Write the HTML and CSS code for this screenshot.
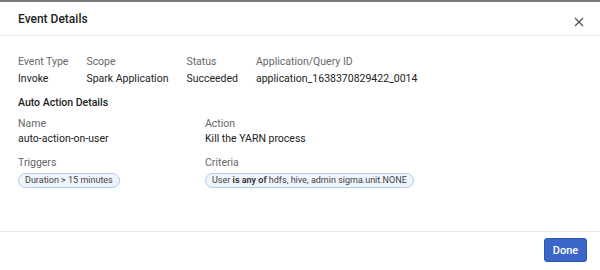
FILE: index.html
```html
<!DOCTYPE html>
<html lang="en">

<head>
  <meta charset="UTF-8">
  <meta name="viewport" content="width=device-width, initial-scale=1.0">
  <title>Event Details</title>
  <link rel="stylesheet" href="styles.css">
</head>

<body>
  <div class="modal">
    <div class="modal-header">
      <h2>Event Details</h2>
      <button class="close-btn" aria-label="Close">
        <svg width="10" height="10" viewBox="0 0 10 10">
          <path d="M1 1L9 9M9 1L1 9" stroke="#555" stroke-width="1.3" fill="none" />
        </svg>
      </button>
    </div>

    <div class="modal-body">
      <div class="summary">
        <div class="field">
          <div class="label">Event Type</div>
          <div class="value">Invoke</div>
        </div>
        <div class="field">
          <div class="label">Scope</div>
          <div class="value">Spark Application</div>
        </div>
        <div class="field">
          <div class="label">Status</div>
          <div class="value">Succeeded</div>
        </div>
        <div class="field">
          <div class="label">Application/Query ID</div>
          <div class="value">application_1638370829422_0014</div>
        </div>
      </div>

      <h4 class="section-title">Auto Action Details</h4>
      <div class="details">
        <div class="field">
          <div class="label">Name</div>
          <div class="value">auto-action-on-user</div>
        </div>
        <div class="field">
          <div class="label">Action</div>
          <div class="value">Kill the YARN process</div>
        </div>
        <div class="field">
          <div class="label">Triggers</div>
          <span class="pill">Duration &gt; 15 minutes</span>
        </div>
        <div class="field">
          <div class="label">Criteria</div>
          <span class="pill">User <b>is any of</b> hdfs, hive, admin sigma.unit.NONE</span>
        </div>
      </div>
    </div>

    <div class="modal-footer">
      <button class="done-btn">Done</button>
    </div>
  </div>
</body>

</html>
```

FILE: styles.css
```css
body {
  margin: 0;
  font-family: Roboto, "Liberation Sans", Arial, sans-serif;
  background: white;
  color: #222;
}

.modal {
  height: 270px;
  box-sizing: border-box;
  border-top: 2px solid #7a7a7a;
  display: flex;
  flex-direction: column;
}

.modal-header {
  height: 33px;
  padding: 0 16px 0 18px;
  display: flex;
  align-items: center;
  justify-content: space-between;
  border-bottom: 1px solid #e6e6e6;
}

.modal-header h2 {
  margin: 0;
  font-size: 12px;
  font-weight: 500;
  color: #222;
}

.close-btn {
  background: none;
  border: none;
  padding: 0;
  width: 10px;
  height: 10px;
  margin-top: 3px;
  cursor: pointer;
}

.modal-body {
  flex: 1;
  padding: 18px 18px 0;
}

.summary {
  display: flex;
  gap: 18px;
}

.summary .value {
  margin-top: 1px;
}

.label {
  font-size: 10.5px;
  line-height: 16px;
  color: #666;
}

.value {
  font-size: 10.5px;
  line-height: 16px;
  color: #222;
}

.section-title {
  margin: 8px 0 5px;
  font-size: 10.5px;
  line-height: 16px;
  font-weight: 500;
  color: #222;
}

.details {
  display: grid;
  grid-template-columns: 187px 1fr;
  row-gap: 9px;
}

.details .field {
  display: flex;
  flex-direction: column;
  align-items: flex-start;
}

.details .value {
  line-height: 14px;
}

.pill {
  margin-top: 2px;
  padding: 0 6px;
  font-size: 9px;
  line-height: 13px;
  color: #444;
  background: #eef4fc;
  border: 1px solid #b3cbef;
  border-radius: 8px;
}

.pill b {
  font-weight: 600;
  color: #333;
}

.modal-footer {
  height: 38px;
  border-top: 1px solid #e6e6e6;
  display: flex;
  align-items: center;
  justify-content: flex-end;
  padding: 0 13px;
}

.done-btn {
  width: 43px;
  height: 24px;
  margin-top: -2px;
  background: #3b66c9;
  border: 1px solid #2d55b3;
  border-radius: 3px;
  color: white;
  font-family: Roboto, "Liberation Sans", Arial, sans-serif;
  font-size: 11px;
  font-weight: 500;
  cursor: pointer;
}
```
